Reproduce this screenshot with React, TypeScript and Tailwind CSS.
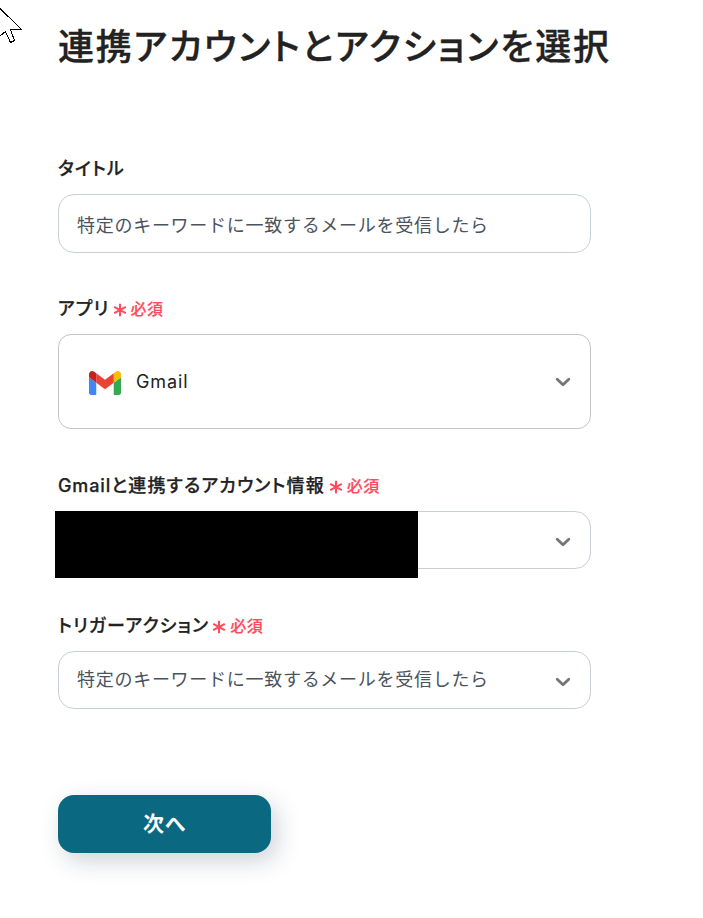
import React from "react";

const text = "特定のキーワードに一致するメールを受信したら";

function Chevron({ className = "" }: { className?: string }) {
  return (
    <svg width="16" height="10" viewBox="0 0 16 10" fill="none" className={"mr-[19px] shrink-0 " + className}>
      <path d="M2.2 2.2 8 7.7 13.8 2.2" stroke="#757575" strokeWidth="2.8" strokeLinecap="round" strokeLinejoin="round" />
    </svg>
  );
}

function Label({ children, required = false }: { children: React.ReactNode; required?: boolean }) {
  return (
    <div className="flex h-6 items-center whitespace-nowrap pt-0.5 text-[18px] leading-6 font-medium tracking-[1.15px] text-[#222]">
      <span className="[-webkit-text-stroke:0.25px_#222] [font-feature-settings:'palt']">{children}</span>
      {required && (
        <span className="ml-[3px] flex items-center text-[#ff4b5c]">
          <svg width="14" height="14" viewBox="0 0 14 14" className="mt-[2px] mr-1" stroke="currentColor" strokeWidth="2.1">
            <path d="M7 .7v12.6M1.2 3.9l11.6 6.2M12.8 3.9 1.2 10.1" />
          </svg>
          <span className="text-[16px] tracking-[0.5px] [-webkit-text-stroke:0.2px_#ff4b5c]">必須</span>
        </span>
      )}
    </div>
  );
}

function Gmail() {
  return (
    <svg width="32" height="24" viewBox="52 42 88 66" className="mt-[2px] ml-[30px]">
      <path fill="#4285f4" d="M58 108h14V74L52 59v43c0 3.32 2.69 6 6 6" />
      <path fill="#34a853" d="M120 108h14c3.32 0 6-2.69 6-6V59l-20 15" />
      <path fill="#fbbc04" d="M120 48v26l20-15v-8c0-7.42-8.47-11.65-14.4-7.2" />
      <path fill="#ea4335" d="M72 74V48l24 18 24-18v26L96 92" />
      <path fill="#c5221f" d="M52 51v8l20 15V48l-5.6-4.2c-5.94-4.45-14.4-.22-14.4 7.2" />
    </svg>
  );
}

export default function App() {
  return (
    <main className="relative h-[918px] w-[703px] overflow-hidden bg-white pl-[58px] font-[Inter,'Noto_Sans_CJK_JP',sans-serif]">
      <svg className="absolute top-0 left-0" width="24" height="46" viewBox="0 0 24 46" fill="none" stroke="#000" shapeRendering="crispEdges">
        <path d="M-1 7.5 21.5 29.5H10.5l4 11-4 2-5-11-6 5" />
      </svg>
      <h1 className="pt-[19px] text-[36px] leading-[56px] font-medium tracking-[1.8px] whitespace-nowrap text-[#222] [-webkit-text-stroke:0.35px_#222] [font-feature-settings:'palt']">
        連携アカウントとアクションを選択
      </h1>
      <form className="w-[533px]">
        <div className="mt-[81px]">
          <Label>タイトル</Label>
          <div className="mt-[14px] flex h-[59px] items-center rounded-[16px] border border-[#c9d0d9] pl-[18px] text-[18px] tracking-[0.72px] text-[#4b535d]">
            <span className="mt-1">{text}</span>
          </div>
        </div>
        <div className="mt-[43px]">
          <Label required>アプリ</Label>
          <div className="mt-[14px] flex h-[95px] items-center rounded-[13px] border border-[#c4c4c4]">
            <Gmail />
            <span className="ml-[15px] flex-1 text-[18px] tracking-[0.9px] text-[#222]">Gmail</span>
            <Chevron />
          </div>
        </div>
        <div className="mt-[44px]">
          <Label required><span className="tracking-[0.9px]">Gmail</span>と連携するアカウント情報<span className="inline-block w-px" /></Label>
          <div className="relative mt-[14px] flex h-[58px] items-center justify-end rounded-[16px] border border-[#c9ced8]">
            <div className="absolute -top-px -left-1 h-[67px] w-[363px] bg-black" />
            <Chevron className="mt-1" />
          </div>
        </div>
        <div className="mt-[44px]">
          <Label required>トリガーアクション</Label>
          <div className="mt-[14px] flex h-[58px] items-center rounded-[16px] border border-[#c9ced8] pl-[18px] text-[18px] tracking-[0.72px] text-[#4b535d]">
            <span className="mb-0.5 flex-1">{text}</span>
            <Chevron className="mt-1" />
          </div>
        </div>
        <button type="button" className="mt-[86px] flex h-[58px] w-[213px] items-center justify-center rounded-[16px] bg-[#0a6880] text-[21px] font-bold tracking-[0.8px] text-white shadow-[6px_8px_24px_rgba(10,40,60,0.2)] [font-feature-settings:'palt']">
          次へ
        </button>
      </form>
    </main>
  );
}
